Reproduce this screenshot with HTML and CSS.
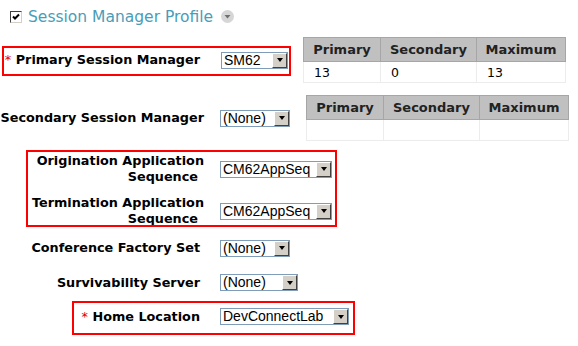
FILE: index.html
```html
<!DOCTYPE html>
<html lang="en">
<head>
    <meta charset="UTF-8">
    <title>Session Manager Profile</title>
    <link rel="stylesheet" href="styles.css">
</head>
<body>
<div class="page">
    <div class="header">
        <span class="checkbox">
            <svg width="8" height="8" viewBox="0 0 8 8"><path d="M1 3.5 L3 5.5 L7 1.5" stroke="#000" stroke-width="2" fill="none"/></svg>
        </span>
        <span class="title">Session Manager Profile</span>
        <span class="collapse">
            <svg width="13" height="13" viewBox="0 0 13 13"><circle cx="6.5" cy="6.5" r="6.5" fill="#d6d6d6"/><path d="M3.5 5 L9.5 5 L6.5 8.5 Z" fill="#707070"/></svg>
        </span>
    </div>

    <div class="row row-primary">
        <div class="label"><span class="req">*</span> Primary Session Manager</div>
        <div class="field">
            <span class="select w-sm62"><span class="value">SM62</span><span class="drop"></span></span>
        </div>
        <table class="counts counts-primary">
            <tr><th class="c1">Primary</th><th class="c2">Secondary</th><th class="c3">Maximum</th></tr>
            <tr><td>13</td><td>0</td><td>13</td></tr>
        </table>
    </div>

    <div class="row row-secondary">
        <div class="label label-wide">Secondary Session Manager</div>
        <div class="field">
            <span class="select w-none"><span class="value">(None)</span><span class="drop"></span></span>
        </div>
        <table class="counts counts-secondary">
            <tr><th class="c1">Primary</th><th class="c2">Secondary</th><th class="c3">Maximum</th></tr>
            <tr><td>&nbsp;</td><td></td><td></td></tr>
        </table>
    </div>

    <div class="row row-orig">
        <div class="label label-wide">Origination Application<br><span class="tail">Sequence</span></div>
        <div class="field">
            <span class="select w-seq"><span class="value">CM62AppSeq</span><span class="drop"></span></span>
        </div>
    </div>

    <div class="row row-term">
        <div class="label label-wide">Termination Application<br><span class="tail">Sequence</span></div>
        <div class="field">
            <span class="select w-seq"><span class="value">CM62AppSeq</span><span class="drop"></span></span>
        </div>
    </div>

    <div class="row row-conf">
        <div class="label">Conference Factory Set</div>
        <div class="field">
            <span class="select w-none"><span class="value">(None)</span><span class="drop"></span></span>
        </div>
    </div>

    <div class="row row-surv">
        <div class="label">Survivability Server</div>
        <div class="field">
            <span class="select w-surv"><span class="value">(None)</span><span class="drop"></span></span>
        </div>
    </div>

    <div class="row row-home">
        <div class="label"><span class="req">*</span> Home Location</div>
        <div class="field">
            <span class="select w-loc"><span class="value">DevConnectLab</span><span class="drop"></span></span>
        </div>
    </div>

    <!-- red annotation boxes drawn over the form -->
    <div class="mark mark-1"></div>
    <div class="mark mark-2"></div>
    <div class="mark mark-3"></div>
</div>
</body>
</html>
```

FILE: styles.css
```css
body {
    margin: 0;
    background: #fff;
    font-family: "DejaVu Sans", Verdana, sans-serif;
    color: #000;
}
.page {
    position: relative;
    width: 578px;
    height: 346px;
}
.header {
    display: flex;
    align-items: center;
    height: 22px;
    padding-top: 6px;
    padding-left: 10px;
    margin-bottom: 3px;
}
.checkbox {
    width: 10px;
    height: 10px;
    border: 1px solid #404040;
    border-right-color: #d4d0c8;
    border-bottom-color: #d4d0c8;
    background: #fff;
    display: flex;
    align-items: center;
    justify-content: center;
}
.title {
    margin-left: 6px;
    font-size: 15.5px;
    color: #4a9cb8;
}
.collapse {
    display: flex;
    margin-left: 8px;
    margin-top: -1px;
}
.row {
    display: flex;
    align-items: center;
}
.row-primary { height: 58px; }
.row-secondary { height: 58px; }
.row-orig { height: 44px; }
.row-term { height: 40px; }
.row-conf { height: 34px; }
.row-surv { height: 35px; }
.row-home { height: 33px; }

.label {
    width: 200px;
    text-align: right;
    font-weight: bold;
    font-size: 12.8px;
    line-height: 16px;
    white-space: nowrap;
}
.label-wide {
    width: 204px;
}
.tail {
    margin-right: 6px;
}
.req {
    color: #e00000;
    font-weight: normal;
}
.field {
    margin-left: 20px;
}
.row-primary .field { margin-left: 21px; }
.label-wide + .field { margin-left: 16px; }

.select {
    display: flex;
    height: 15px;
    border: 1px solid #7f9db9;
    background: #fff;
    font-family: "Liberation Sans", Arial, sans-serif;
    font-size: 14px;
}
.select .value {
    flex: 1;
    padding-left: 2px;
    line-height: 15px;
    white-space: nowrap;
    overflow: hidden;
}
.drop {
    flex: none;
    width: 13px;
    height: 13px;
    background: #d4d0c8;
    border: 1px solid;
    border-color: #fff #404040 #404040 #fff;
    display: flex;
    align-items: center;
    justify-content: center;
}
.drop::after {
    content: "";
    border-left: 3.5px solid transparent;
    border-right: 3.5px solid transparent;
    border-top: 4px solid #000;
}
.w-sm62 { width: 65px; }
.w-none { width: 68px; }
.w-seq { width: 110px; }
.w-surv { width: 76px; }
.w-loc { width: 127px; }

.counts {
    border-collapse: collapse;
    font-size: 12.5px;
    border: 1px solid #c8c8c8;
}
.counts-primary { margin-left: 15px; }
.counts-secondary { margin-left: 16px; }
.counts th {
    background: #c0c0c0;
    border: 1px solid #a6a6a6;
    font-weight: bold;
    font-size: 13px;
    height: 23px;
    padding: 0;
    color: #222;
}
.counts td {
    border: 1px solid #ececec;
    height: 20px;
    padding: 0 0 0 10px;
}
.counts .c1 { width: 76px; }
.counts .c2 { width: 95px; }
.counts .c3 { width: 88px; }

.mark {
    position: absolute;
    border: 2px solid #ff0000;
}
.mark-1 { left: 2px; top: 46px; width: 285px; height: 26px; }
.mark-2 { left: 26px; top: 150px; width: 307px; height: 73px; }
.mark-3 { left: 72px; top: 301px; width: 279px; height: 30px; }
```
